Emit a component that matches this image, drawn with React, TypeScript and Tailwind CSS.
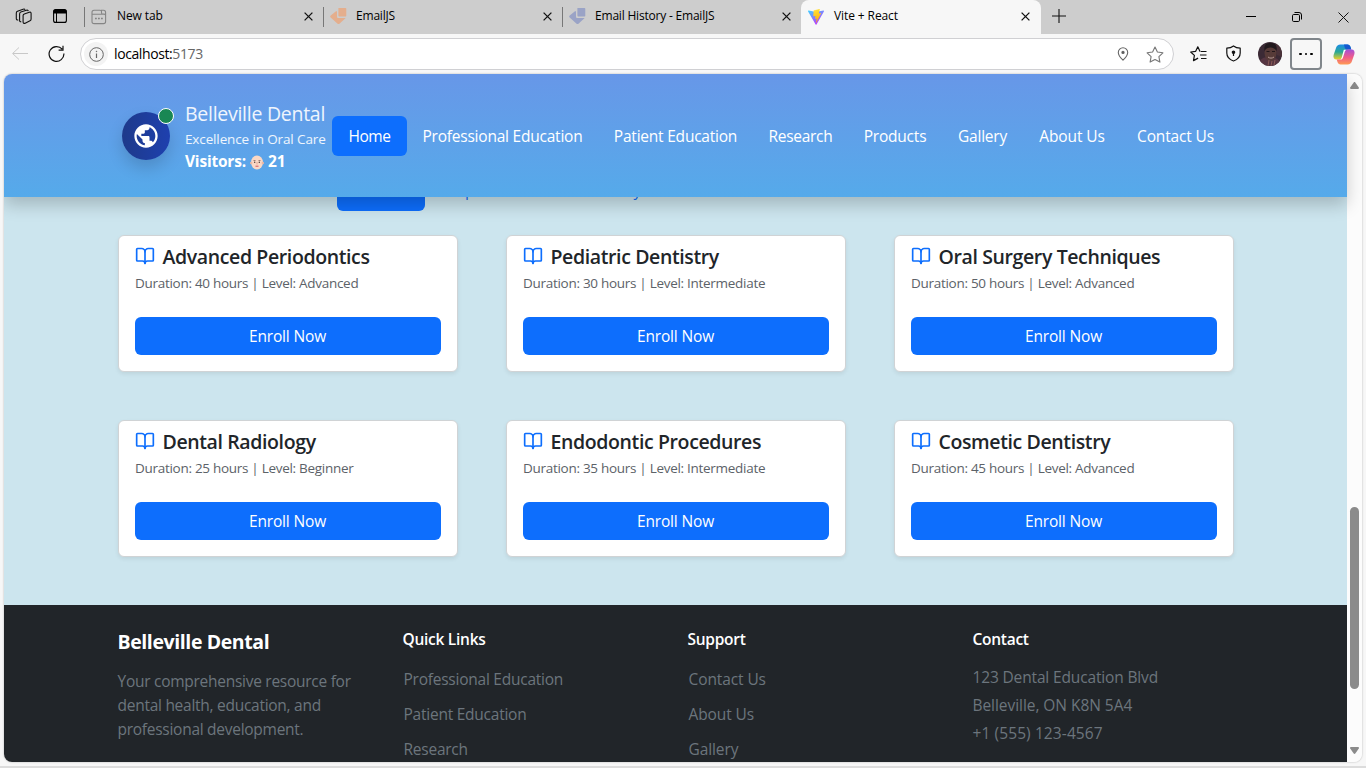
import React from "react";
import { BookOpen } from "lucide-react";
import { MdPublic } from "react-icons/md";

const navItems = [
  { label: "Home", box: "w-[75px]", text: "tracking-[-0.4px]", active: true },
  { label: "Professional Education", box: "w-[191px]", text: "tracking-[-0.22px]" },
  { label: "Patient Education", box: "w-[155px]", text: "tracking-[-0.22px]" },
  { label: "Research", box: "w-[95px]", text: "tracking-[-0.3px]" },
  { label: "Products", box: "w-[94px]", text: "tracking-[-0.2px]" },
  { label: "Gallery", box: "w-[81px]", text: "tracking-[-0.2px]" },
  { label: "About Us", box: "w-[98px]", text: "tracking-[-0.1px]" },
  { label: "Contact Us", box: "w-[109px]", text: "tracking-[-0.15px]" },
];

const courses = [
  { title: "Advanced Periodontics", hours: 40, level: "Advanced" },
  { title: "Pediatric Dentistry", hours: 30, level: "Intermediate" },
  { title: "Oral Surgery Techniques", hours: 50, level: "Advanced" },
  { title: "Dental Radiology", hours: 25, level: "Beginner" },
  { title: "Endodontic Procedures", hours: 35, level: "Intermediate" },
  { title: "Cosmetic Dentistry", hours: 45, level: "Advanced" },
];

function CloseX() {
  return (
    <svg width="9" height="9" viewBox="0 0 9 9" fill="none" stroke="#111" strokeWidth="1.3">
      <path d="M.6.6l7.8 7.8M8.4.6L.6 8.4" />
    </svg>
  );
}

function NewTabIcon() {
  return (
    <svg width="16" height="16" viewBox="0 0 16 16" fill="none" stroke="#858585" strokeWidth="1.1">
      <path d="M1 5.2V3.4C1 2 1.8 1.3 3 1.3h6.200c.8 0 1.300.5 1.300 1.200v1.200c0 .9.5 1.400 1.300 1.400h1.300c1 0 1.500.7 1.500 1.500V12.500c0 1.300-.9 2.100-2.100 2.100H3.200C1.900 14.600 1 13.800 1 12.500zM1 5.200h9.500M10 1.300h2.500c1.200 0 2.100.8 2.100 2.100v3" />
      <path d="M4 9.500h1.800M7 9.500h1.800M10 9.500h1.800" strokeWidth="1.600" />
    </svg>
  );
}

function EmailIcon({ color }: { color: string }) {
  return (
    <svg width="17" height="17" viewBox="0 0 17 17" fill={color}>
      <path d="M7 3.200H6L.7 7.500c-.7.6-.7 1.200 0 1.900l6.600 6.100c.9.8 1.600.8 2.400 0l6-5.600H8.500C7.500 9.900 7 9.400 7 8.400z" />
      <path d="M8.400 0h7.100c.5 0 .8.300.8.800v6.900c0 .5-.3.800-.8.800H9.300c-.6 0-.9-.3-.9-.9z" />
    </svg>
  );
}

function ViteIcon() {
  return (
    <svg width="16" height="16" viewBox="0 0 32 32">
      <defs>
        <linearGradient id="va" x1="0" y1="0" x2="0.6" y2="1">
          <stop stopColor="#41d1ff" />
          <stop offset="1" stopColor="#bd34fe" />
        </linearGradient>
        <linearGradient id="vb" x1="0.400" y1="0" x2="0.600" y2="1">
          <stop stopColor="#ffea83" />
          <stop offset=".1" stopColor="#ffdd35" />
          <stop offset="1" stopColor="#ffa800" />
        </linearGradient>
      </defs>
      <path d="M31.800 4.800L17 31.200c-.4.7-1.300.7-1.700 0L.2 4.800C-.3 4 .4 3 1.300 3.200L16 5.800l14.700-2.600c.9-.2 1.600.8 1.100 1.600z" fill="url(#va)" />
      <path d="M22.600.1L11.700 2.300c-.3 0-.4.200-.4.500l-.7 11.300c0 .4.300.7.700.6l3-.7c.4-.1.800.3.700.7l-.9 4.400c-.1.400.3.800.7.700l1.900-.6c.4-.1.800.2.700.7l-1.400 6.900c-.1.500.5.700.8.300l9.200-18.100c.2-.4-.2-.9-.6-.8l-3.100.6c-.5.100-.8-.3-.7-.7l1.900-7.300c.1-.4-.3-.8-.9-.7z" fill="url(#vb)" />
    </svg>
  );
}

function TabStrip() {
  const tab = "flex h-[34px] shrink-0 items-center pb-px text-[12px] text-black";
  return (
    <div className="flex h-[34px] bg-[#cdcdcd]">
      <div className="flex w-[85px] shrink-0 items-center pb-[2px] pl-[15px]">
        <svg width="18" height="17" viewBox="0 0 18 17" fill="none" stroke="#111" strokeWidth="1.1" strokeLinejoin="round">
          <path d="M9.300 5.900l5-1.700c1.100-.3 1.800.1 1.800 1.200v5.600c0 .9-.3 1.500-1.100 1.800l-4.800 2.400c-1.200.5-2.100.1-2.100-1.200V7.600c0-.9.3-1.400 1.200-1.700z" />
          <path d="M6.300 13.700c-1.200.2-1.700-.4-1.700-1.300V6c0-1 .4-1.600 1.200-1.900l5.600-1.900c1-.3 1.700 0 1.900 1" />
          <path d="M3.300 12c-1.300.2-2-.3-2-1.400V5c0-1 .4-1.500 1.200-1.800l5.600-2c1-.3 1.700-.1 2 .5" />
        </svg>
        <svg className="ml-[20px]" width="14" height="14" viewBox="0 0 14 14">
          <rect x=".6" y=".6" width="12.800" height="12.800" rx="2" fill="none" stroke="#000" strokeWidth="1.100" />
          <path d="M.5 4.500V2.500C.5 1.200 1.300.5 2.500.5h9c1.200 0 2 .7 2 2v2z" />
          <path d="M3.500 4v9" stroke="#000" />
        </svg>
      </div>
      <div className={`${tab} w-[239px]`}>
        <span className="mr-[6px] -ml-px h-5 w-px bg-[#777]" />
        <NewTabIcon />
        <span className="ml-[10px] w-[187px] pb-px tracking-[-0.1px]">New tab</span>
        <CloseX />
      </div>
      <div className={`${tab} w-[239px]`}>
        <span className="mr-[6px] -ml-px h-5 w-px bg-[#777]" />
        <EmailIcon color="#e4ae8d" />
        <span className="ml-[9px] w-[187px] pb-px tracking-[-0.2px]">EmailJS</span>
        <CloseX />
      </div>
      <div className={`${tab} w-[238px]`}>
        <span className="mr-[6px] -ml-px h-5 w-px bg-[#777]" />
        <EmailIcon color="#9aa3c6" />
        <span className="ml-[9px] w-[187px] pb-px tracking-[-0.2px]">Email History - EmailJS</span>
        <CloseX />
      </div>
      <div className={`${tab} w-[240px] rounded-t-[8px] bg-[#f7f7f7] pl-[7px]`}>
        <ViteIcon />
        <span className="ml-[10px] w-[187px] pb-px tracking-[-0.1px]">Vite + React</span>
        <CloseX />
      </div>
      <div className="flex flex-1 items-center pb-[2px] pl-[11px]">
        <svg width="14" height="14" viewBox="0 0 14 14" stroke="#111" strokeWidth="1.100"><path d="M7 0v14M0 7h14" /></svg>
        <div className="ml-auto flex items-center gap-[36px] pt-[2px] pr-[17px]">
          <svg width="10" height="10" viewBox="0 0 10 10" stroke="#000"><path d="M0 4.500h10" /></svg>
          <svg width="10" height="10" viewBox="0 0 10 10" fill="none" stroke="#000">
            <rect x=".5" y="2.500" width="7" height="7" rx="1.200" />
            <path d="M2.500.5H7A2.500 2.500 0 0 1 9.500 3v4.500" />
          </svg>
          <svg width="11" height="11" viewBox="0 0 11 11" stroke="#111"><path d="M.5.5l10 10M10.500.5l-10 10" /></svg>
        </div>
      </div>
    </div>
  );
}

function Toolbar() {
  return (
    <div className="flex h-10 items-center bg-[#f7f7f7]">
      <svg className="ml-3" width="16" height="14" viewBox="0 0 16 14" fill="none" stroke="#c8c8c8"><path d="M16 6.500H.8M7 .5L.6 6.500 7 12.500" /></svg>
      <svg className="mb-px ml-5" width="17" height="17" viewBox="0 0 17 17" fill="none" stroke="#111" strokeWidth="1.200">
        <path d="M14.200 4.200A7.400 7.400 0 1 0 15.900 8.500M15 .8v4.300h-4.400" />
      </svg>
      <div className="ml-[15px] flex h-8 w-[1094px] items-center rounded-full border border-[#d0d0d3] bg-white">
        <span className="ml-[3px] flex size-6 items-center justify-center rounded-full bg-[#f3f3f3]">
          <svg width="15" height="15" viewBox="0 0 15 15" fill="none" stroke="#666">
            <circle cx="7.500" cy="7.500" r="6.800" />
            <path d="M7.500 6.500v4.500" strokeWidth="1.200" /><circle cx="7.500" cy="4.400" r=".5" fill="#666" strokeWidth=".4" />
          </svg>
        </span>
        <span className="ml-[6px] pb-[2px] text-[14px] tracking-[-0.4px] text-black">localhost:<span className="text-[#666]">5173</span></span>
        <div className="ml-auto flex items-center gap-[17px] pr-[9px]">
          <svg width="12" height="14" viewBox="0 0 12 14" fill="none" stroke="#666" strokeWidth="1.100">
            <path d="M6 13.200C3.500 10.800 1.300 8.400 1.300 5.400a4.700 4.700 0 0 1 9.400 0c0 3-2.200 5.400-4.700 7.800z" /><circle cx="6" cy="5.400" r="1.100" fill="#555" />
          </svg>
          <svg width="18" height="17" viewBox="0 0 18 17" fill="none" stroke="#777" strokeWidth="1.100" strokeLinejoin="round">
            <path d="M9 1l2.400 5 5.500.8-4 3.800 1 5.500L9 13.500l-4.900 2.600 1-5.500-4-3.800 5.500-.8z" />
          </svg>
        </div>
      </div>
      <svg className="ml-4" width="17" height="16" viewBox="0 0 17 16" fill="none" stroke="#111" strokeWidth="1.200" strokeLinejoin="round">
        <path d="M10.500 5.500L9.900 5.300 7.800.8 5.700 5.300.7 6l3.700 3.400-.9 5.200 4.600-2.500M11 5.500h5.500M10 9h6.500M11 12.500h5.500" />
      </svg>
      <svg className="mb-px ml-[19px]" width="15" height="17" viewBox="0 0 15 17" fill="none" stroke="#111" strokeWidth="1.200" strokeLinejoin="round">
        <path d="M7.500.9C9.500 2.400 11.600 3 14.200 3.200V8c0 4-2.400 6.500-6.700 8C3.200 14.500.8 12 .8 8V3.200C3.400 3 5.500 2.400 7.500.9z" />
        <circle cx="7.500" cy="7.300" r="1.200" fill="#111" /><path d="M7.500 8v3" />
      </svg>
      <svg className="ml-[17px] rounded-full" width="24" height="24" viewBox="0 0 24 24">
        <rect width="24" height="24" fill="#3b2a35" />
        <path d="M0 24c1-7 5-8 8-9h7c4 1 8 4 8 9z" fill="#563642" />
        <path d="M17 0h7v15l-5-2z" fill="#4a3138" />
        <ellipse cx="12.500" cy="11" rx="6" ry="8" fill="#573b38" />
        <path d="M6.500 9C5.500 2 9 1 13 1c4.500 0 6.500 3 5.500 8-2-4-9-5-12 0z" fill="#21191d" />
        <path d="M8.500 9.500h3M14 9.500h3" stroke="#21171a" strokeWidth="1.200" />
        <path d="M10 15c2 1.500 4 1.500 6 0" stroke="#b79a96" fill="none" />
        <path d="M10 24l1-6M13 24l1-5M16 23l1-5" stroke="#8b5c58" />
      </svg>
      <div className="ml-2 flex h-8 w-8 items-center justify-center gap-[3px] rounded-[4px] border-2 border-[#80868b]">
        <span className="size-[2.500px] rounded-full bg-black" />
        <span className="size-[2.500px] rounded-full bg-black" />
        <span className="size-[2.500px] rounded-full bg-black" />
      </div>
      <svg className="ml-[11px]" width="22" height="21" viewBox="0 0 22 21">
        <defs>
          <linearGradient id="c1" x1="0" y1="0" x2="0" y2="1"><stop stopColor="#1b8be8" /><stop offset=".5" stopColor="#2aa994" /><stop offset="1" stopColor="#f0cf28" /></linearGradient>
          <linearGradient id="c2" x1="0" y1="0" x2="0" y2="1"><stop stopColor="#a64fd8" /><stop offset=".5" stopColor="#ee5a8c" /><stop offset="1" stopColor="#ff9b51" /></linearGradient>
        </defs>
        <path d="M7.500.5h7c1.500 0 2.500 1.200 3 2.500l.8 2.500h-3c-1.700 0-2.700.8-3.200 2.500l-1.700 5.500c-.4 1.300-1.200 2-2.600 2H3.500C1 15.500 0 13.500.6 11L3 4C3.700 1.700 5 .5 7.500.5z" fill="url(#c1)" />
        <path d="M11 .5h3.500c1.500 0 2.500 1.200 3 2.500l.8 2.500h-4c-1.500 0-2.300-.8-2.600-2z" fill="#1558cf" />
        <path d="M14.500 20.500h-7c-1.500 0-2.500-1.200-3-2.500l-.8-2.500h3c1.700 0 2.700-.8 3.200-2.500l1.700-5.500c.4-1.300 1.200-2 2.600-2h4.300c2.500 0 3.500 2 2.900 4.500L19 17c-.7 2.300-2 3.500-4.500 3.500z" fill="url(#c2)" />
        <path d="M10.800 5.800h2.600c-1 .6-1.400 1.300-1.700 2.300L10 13.500c-.3.900-.8 1.600-1.600 2H7.200c1-.6 1.300-1.300 1.600-2.300z" fill="#fff" />
      </svg>
    </div>
  );
}

function SiteHeader() {
  return (
    <header className="relative z-10 flex h-[123px] shrink-0 bg-linear-to-b from-[#6797e8] to-[#55aaea] pl-[118px] text-white shadow-[0_8px_16px_rgba(0,0,0,0.2)]">
      <div className="relative mt-[38px] flex size-12 items-center justify-center rounded-full bg-linear-to-r from-[#1e3a8a] to-[#1e40af] shadow-[0_8px_16px_rgba(0,0,0,0.15)]">
        <MdPublic size={28} />
        <span className="absolute -top-1 left-9 size-4 rounded-full border border-white bg-[#198754]" />
      </div>
      <div className="ml-[15px] w-[147px] whitespace-nowrap pt-[26px]">
        <div className="h-[29px] text-[19.5px] leading-[28px] tracking-[-0.27px] text-white/90">Belleville Dental</div>
        <div className="h-[21px] text-[13.5px] leading-[21px] font-medium tracking-[-0.13px] text-white/90">Excellence in Oral Care</div>
        <div className="flex h-6 items-center text-[15.5px] font-bold tracking-[-0.2px]">
          Visitors:
          <svg className="mr-[4px] ml-[4px]" width="14" height="15" viewBox="0 0 14 15">
            <ellipse cx="7" cy="7.500" rx="6" ry="7" fill="#fbd8c5" />
            <circle cx="1.200" cy="8" r="1.200" fill="#edb9a5" /><circle cx="12.800" cy="8" r="1.200" fill="#edb9a5" />
            <path d="M3.500 5.500h2M8.500 5.500h2" stroke="#8a6a60" strokeWidth=".8" />
            <circle cx="4.700" cy="7.200" r=".7" fill="#40302e" /><circle cx="9.300" cy="7.200" r=".7" fill="#40302e" />
            <path d="M7 7v2.500" stroke="#e0a08c" strokeWidth=".8" /><path d="M5.500 11.200h3" stroke="#cf5560" strokeWidth="1" />
          </svg>
          <span className="tracking-normal">21</span>
        </div>
      </div>
      <nav className="mt-[42px] flex h-10">
        {navItems.map((n) => (
          <a key={n.label} className={`flex items-center justify-center rounded-[6px] pt-[2px] text-[15.5px] font-medium whitespace-nowrap ${n.box} ${n.text} ${n.active ? "bg-[#0d6efd]" : ""}`}>
            {n.label}
          </a>
        ))}
      </nav>
    </header>
  );
}

function CourseCard({ title, hours, level }: { title: string; hours: number; level: string }) {
  return (
    <article className="h-[137px] rounded-[6px] border border-[#d0d3d5] bg-white px-4 pt-[6px] shadow-[0_2px_4px_rgba(0,0,0,0.075)]">
      <h5 className="flex h-[30px] items-center text-[19.5px] font-semibold tracking-[-0.38px] whitespace-nowrap text-[#212529]">
        <BookOpen size={20} className="mr-[7.500px] mb-[2px] text-[#0d6efd]" />
        {title}
      </h5>
      <p className="h-[22px] text-[13.5px] leading-[23px] tracking-[-0.29px] text-[#5c6268]">
        Duration: {hours} hours | Level: {level}
      </p>
      <button className="mt-[23px] block h-[38px] w-full rounded-[6px] bg-[#0d6efd] pt-[2px] pr-px text-[15.5px] tracking-[-0.15px] text-white">Enroll Now</button>
    </article>
  );
}

function Footer() {
  const head = "h-[20px] text-[15.5px] leading-[20px] font-semibold tracking-[-0.27px] text-white";
  const link = "mt-[11px] h-6 leading-6";
  return (
    <footer className="flex flex-1 overflow-hidden bg-[#212529] pl-[113.5px] text-[15.5px] tracking-[-0.24px] whitespace-nowrap text-[#6c757d]">
      <div className="w-[285px] pt-[25px]">
        <h5 className="h-6 text-[19.5px] leading-6 font-bold tracking-[-0.4px] text-white">Belleville Dental</h5>
        <p className="mt-[15px] leading-6 tracking-[-0.27px]">Your comprehensive resource for<br />dental health, education, and<br />professional development.</p>
      </div>
      <div className="w-[285px] pt-[24px]">
        <h6 className={head}>Quick Links</h6>
        <div className="mt-[18px] pl-px"><p className="h-6 leading-6">Professional Education</p><p className={link}>Patient Education</p><p className={link}>Research</p></div>
      </div>
      <div className="w-[285px] pt-[24px]">
        <h6 className={head}>Support</h6>
        <div className="mt-[18px] pl-px tracking-[-0.1px]"><p className="h-6 leading-6">Contact Us</p><p className={link}>About Us</p><p className={link}>Gallery</p></div>
      </div>
      <div className="pt-[24px]">
        <h6 className={head}>Contact</h6>
        <div className="mt-[14px] leading-7 tracking-[-0.15px]"><p>123 Dental Education Blvd</p><p className="tracking-[-0.05px]">Belleville, ON K8N 5A4</p><p className="tracking-[0.1px]">+1 (555) 123-4567</p></div>
      </div>
    </footer>
  );
}

export default function App() {
  return (
    <div className="h-[768px] w-[1366px] overflow-hidden bg-[#f7f7f7] font-['Open_Sans','Noto_Sans',sans-serif]">
      <TabStrip />
      <Toolbar />
      <div className="ml-1 flex h-[688px] w-[1358px] overflow-hidden rounded-[8px] shadow-[0_0_2px_rgba(0,0,0,0.3)]">
        <div className="flex w-[1343px] flex-col">
          <SiteHeader />
          <main className="h-[408px] shrink-0 bg-[#cce5ee] px-[114px]">
            <div className="-mt-[26px] flex h-10">
              <div className="ml-[219px] h-10 w-[88px] rounded-[6px] bg-[#0d6efd]" />
              <span className="pt-[7px] pl-[22px] text-[15.5px] leading-6 tracking-[-0.32px] whitespace-nowrap text-[#0d6efd]">Implant &amp; Modern Dentistry</span>
            </div>
            <div className="mt-6 grid w-[1116px] grid-cols-[340px_340px_340px] gap-12">
              {courses.map((c) => <CourseCard key={c.title} {...c} />)}
            </div>
          </main>
          <Footer />
        </div>
        <div className="flex w-[15px] flex-col items-center bg-[#fcfcfc] pt-[8px]">
          <svg width="9" height="7" viewBox="0 0 9 7" fill="#8b8b8b"><path d="M3.700.5c.5-.6 1.100-.6 1.600 0l3.500 5c.4.700 0 1.500-.8 1.500H1C.2 7-.2 6.200.2 5.500z" /></svg>
          <div className="mt-[418px] h-[182px] w-[9px] rounded-full bg-[#8b8b8b]" />
          <svg className="mt-[58px]" width="9" height="7" viewBox="0 0 9 7" fill="#8b8b8b"><path d="M3.700 6.500c.5.6 1.100.6 1.600 0l3.500-5C9.200.8 8.800 0 8 0H1C.2 0-.2.8.2 1.500z" /></svg>
        </div>
      </div>
      <div className="mt-1 h-[2px] bg-[#dcdcdc]" />
    </div>
  );
}
